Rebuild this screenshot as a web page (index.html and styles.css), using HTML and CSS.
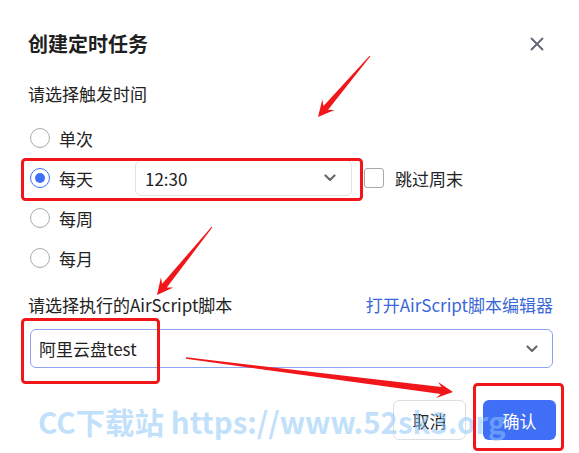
FILE: index.html
```html
<!DOCTYPE html>
<html lang="zh-CN">
<head>
    <meta charset="UTF-8">
    <meta name="viewport" content="width=device-width, initial-scale=1.0">
    <title>创建定时任务</title>
    <link rel="stylesheet" href="styles.css">
</head>
<body>

<div class="dialog">
    <div class="dialog-header">
        <h2>创建定时任务</h2>
        <button class="close-btn" aria-label="关闭">
            <svg width="16" height="16" viewBox="0 0 16 16"><path d="M2.5 2.5 L13.5 13.5 M13.5 2.5 L2.5 13.5" stroke="#5f6472" stroke-width="1.8" stroke-linecap="round"/></svg>
        </button>
    </div>

    <div class="section-label">请选择触发时间</div>

    <div class="radio-group">
        <label class="radio-row">
            <span class="radio"></span>
            <span class="radio-text">单次</span>
        </label>
        <label class="radio-row">
            <span class="radio checked"></span>
            <span class="radio-text">每天</span>
            <div class="select time-select">
                <span>12:30</span>
                <svg class="chevron" width="12" height="8" viewBox="0 0 12 8"><path d="M1.5 1.5 L6 6 L10.5 1.5" fill="none" stroke="#6b6b6b" stroke-width="2.2" stroke-linecap="round" stroke-linejoin="round"/></svg>
            </div>
            <span class="checkbox"></span>
            <span class="checkbox-text">跳过周末</span>
        </label>
        <label class="radio-row">
            <span class="radio"></span>
            <span class="radio-text">每周</span>
        </label>
        <label class="radio-row">
            <span class="radio"></span>
            <span class="radio-text">每月</span>
        </label>
    </div>

    <div class="script-header">
        <span>请选择执行的AirScript脚本</span>
        <a class="editor-link" href="#">打开AirScript脚本编辑器</a>
    </div>

    <div class="select script-select">
        <span>阿里云盘test</span>
        <svg class="chevron" width="12" height="8" viewBox="0 0 12 8"><path d="M1.5 1.5 L6 6 L10.5 1.5" fill="none" stroke="#6b6b6b" stroke-width="2.2" stroke-linecap="round" stroke-linejoin="round"/></svg>
    </div>

    <div class="dialog-footer">
        <button class="btn btn-cancel">取消</button>
        <button class="btn btn-primary">确认</button>
    </div>
</div>

<!-- watermark from the screenshot -->
<div class="watermark">CC下载站 https://www.52sk3.org</div>

<!-- red annotation marks drawn on top of the dialog -->
<svg class="annotations" width="579" height="453" viewBox="0 0 579 453">
    <g fill="none" stroke="#f0161a" stroke-width="3">
        <rect x="22.5" y="159.5" width="339" height="40" rx="3"/>
        <rect x="22.5" y="319.5" width="136" height="63" rx="3"/>
        <rect x="474.5" y="384.5" width="88" height="65" rx="3"/>
    </g>
    <g fill="#f0161a">
        <polygon points="370.4,56.3 328.1,109.8 334.5,110.0 318,117 322.3,99.6 323.5,106.0 369.6,55.7"/>
        <polygon points="212.4,227.3 166.8,287.6 173.3,287.6 157,295 160.9,277.6 162.2,283.8 211.6,226.7"/>
        <polygon points="186.1,357.3 441.5,387.0 438.1,382.1 453,392 436.1,397.9 440.7,394.0 185.9,358.7"/>
    </g>
</svg>

</body>
</html>
```

FILE: styles.css
```css
body {
    margin: 0;
    background-color: #fff;
    font-family: "Noto Sans CJK SC", "Microsoft YaHei", sans-serif;
    font-size: 17px;
    color: #222;
    width: 579px;
    height: 453px;
    overflow: hidden;
}
.dialog {
    padding: 30px 26px 0 28px;
}
.dialog-header {
    display: flex;
    justify-content: space-between;
    align-items: center;
    height: 28px;
}
.dialog-header h2 {
    margin: 0;
    font-size: 20px;
    font-weight: bold;
    color: #1f1f1f;
    line-height: 28px;
}
.close-btn {
    border: none;
    background: none;
    padding: 0;
    margin-right: 8px;
    width: 16px;
    height: 16px;
    display: flex;
    cursor: pointer;
}
.section-label {
    margin-top: 24px;
    line-height: 24px;
}
.radio-group {
    margin-top: 12px;
}
.radio-row {
    display: flex;
    align-items: center;
    height: 40px;
    padding-left: 2px;
}
.radio {
    width: 18px;
    height: 18px;
    border: 1px solid #a9a9a9;
    border-radius: 50%;
    box-sizing: content-box;
    display: flex;
    align-items: center;
    justify-content: center;
}
.radio.checked {
    border-color: #3f6ef7;
}
.radio.checked::after {
    content: "";
    width: 10px;
    height: 10px;
    border-radius: 50%;
    background-color: #3f6ef7;
}
.radio-text {
    margin-left: 9px;
}
.select {
    display: flex;
    align-items: center;
    justify-content: space-between;
    box-sizing: border-box;
    background-color: #fff;
    border-radius: 6px;
}
.time-select {
    width: 217px;
    height: 36px;
    margin-left: 42px;
    padding: 0 15px 0 9px;
    border: 1px solid #e2e2e2;
}
.checkbox {
    width: 18px;
    height: 18px;
    margin-left: 12px;
    border: 1px solid #a9a9a9;
    border-radius: 3px;
}
.checkbox-text {
    margin-left: 11px;
}
.script-header {
    display: flex;
    justify-content: space-between;
    align-items: center;
    margin-top: 15px;
    line-height: 24px;
}
.editor-link {
    color: #3a67d8;
    text-decoration: none;
}
.script-select {
    margin-top: 12px;
    margin-left: 2px;
    height: 39px;
    padding: 0 14px 0 8px;
    border: 1px solid #8ea4f3;
}
.dialog-footer {
    display: flex;
    justify-content: flex-end;
    gap: 17px;
    margin-top: 32px;
    margin-right: -3px;
}
.btn {
    width: 73px;
    height: 40px;
    border-radius: 6px;
    font-family: inherit;
    font-size: 17px;
    cursor: pointer;
}
.btn-cancel {
    background-color: #fff;
    border: 1px solid #dedede;
    color: #222;
}
.btn-primary {
    background-color: #3f6ef7;
    border: none;
    color: #fff;
}
.watermark {
    position: absolute;
    left: 38px;
    top: 400px;
    font-size: 29.5px;
    font-weight: bold;
    color: rgba(140, 198, 250, 0.55);
    white-space: nowrap;
    pointer-events: none;
}
.annotations {
    position: absolute;
    left: 0;
    top: 0;
    pointer-events: none;
}
```
